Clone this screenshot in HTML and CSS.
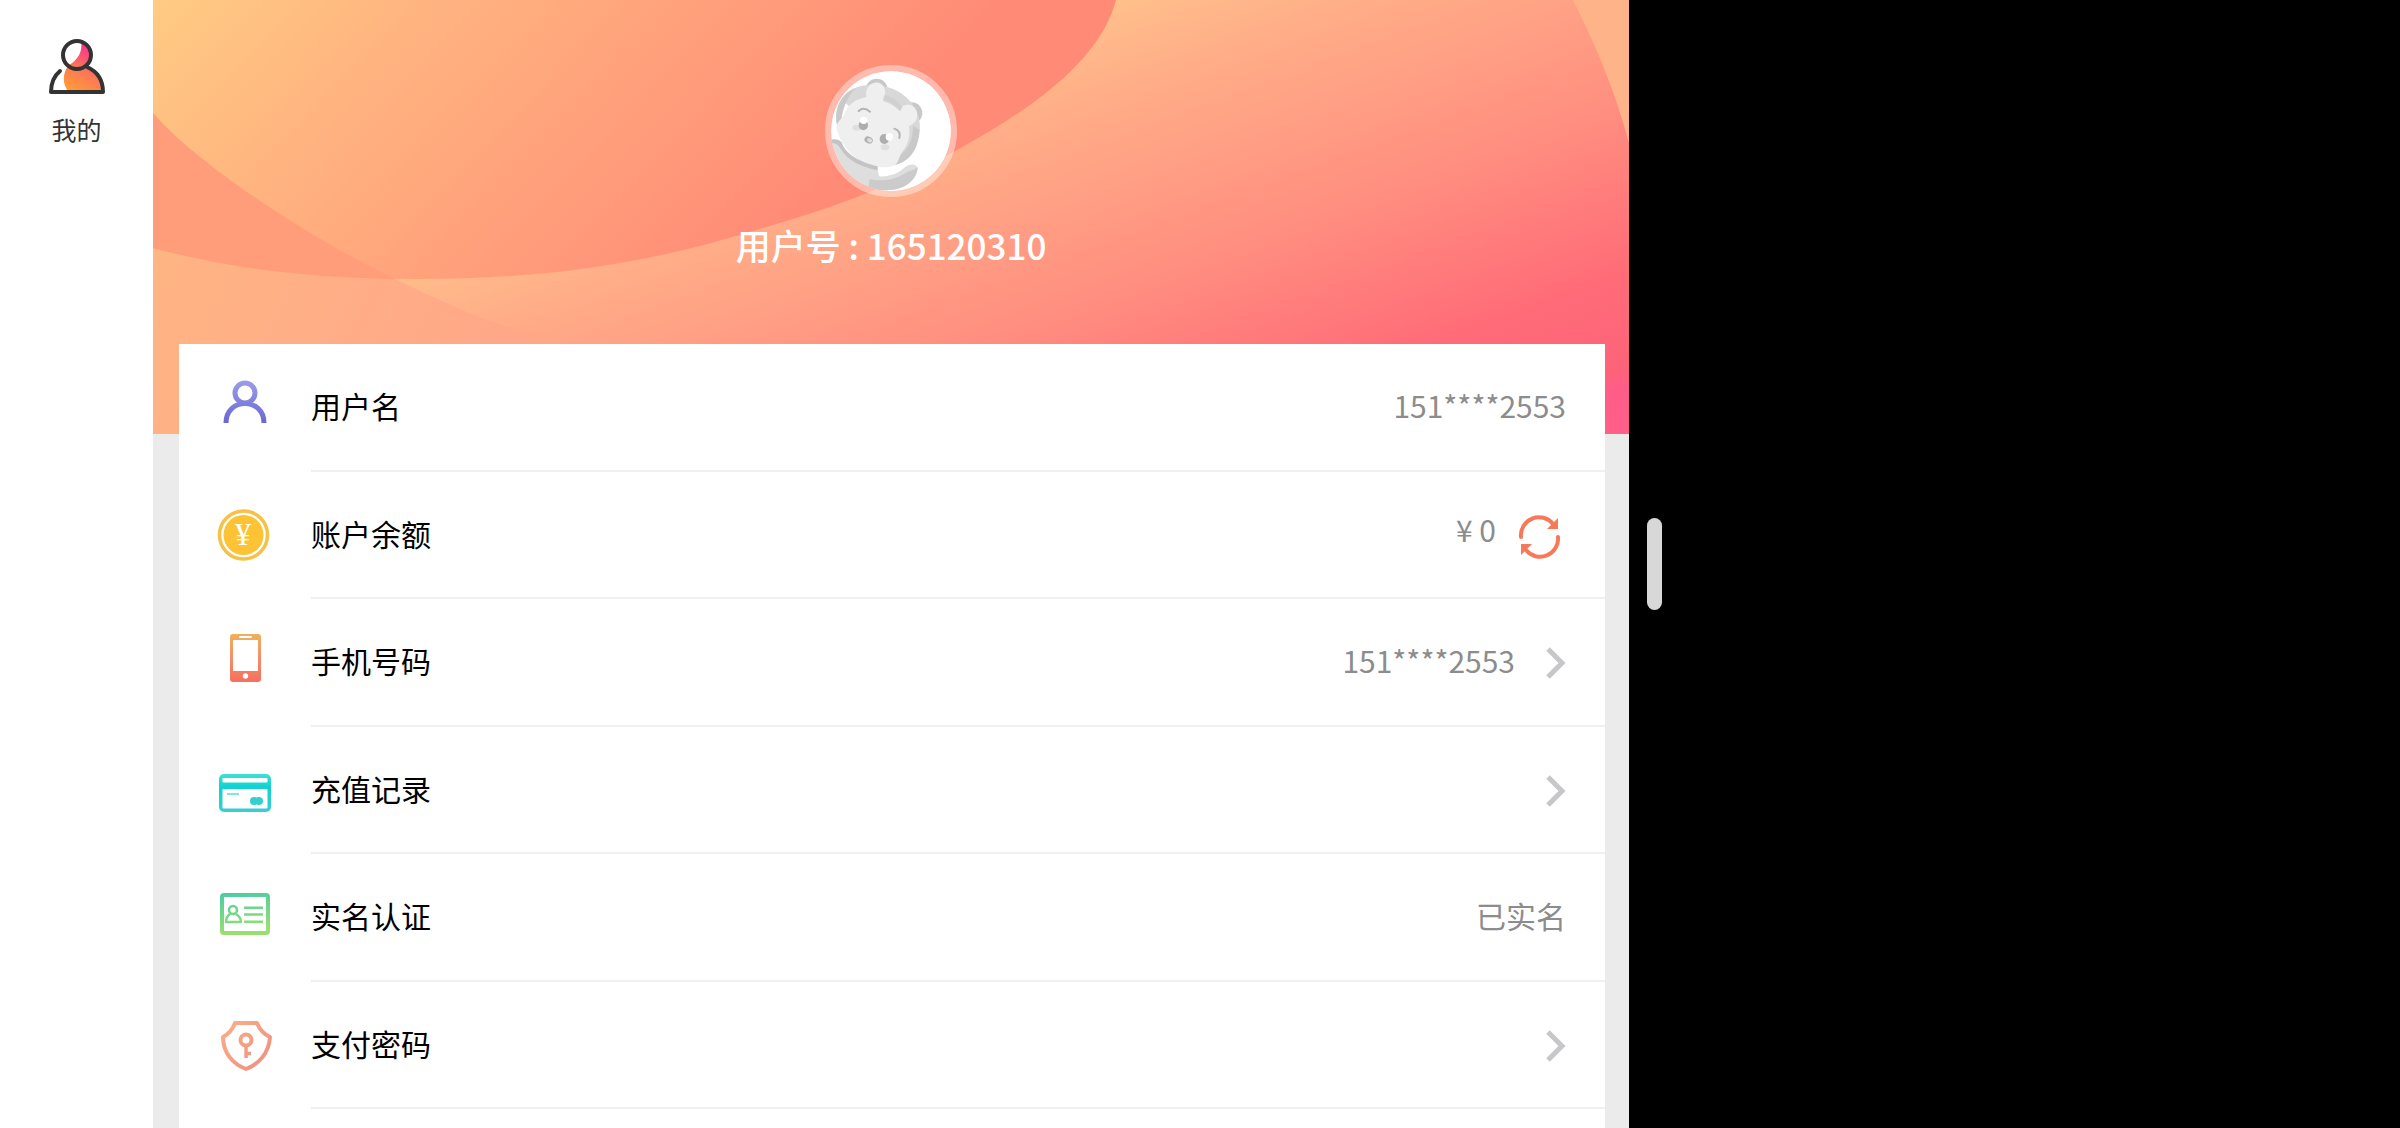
FILE: index.html
```html
<!DOCTYPE html>
<html lang="zh-CN">
<head>
<meta charset="UTF-8">
<meta name="viewport" content="width=device-width, initial-scale=1.0">
<title>我的</title>
<link rel="stylesheet" href="styles.css">
</head>
<body>

<nav class="sidebar">
    <a class="tab" href="#mine">
        <svg class="tab-icon" viewBox="0 0 64 64" fill="none">
            <defs>
                <linearGradient id="g-tab" x1="44" y1="14" x2="22" y2="56" gradientUnits="userSpaceOnUse">
                    <stop offset="0" stop-color="#f5328c"/>
                    <stop offset=".5" stop-color="#fd7458"/>
                    <stop offset="1" stop-color="#ff9c38"/>
                </linearGradient>
            </defs>
            <path fill="url(#g-tab)" d="M36 9C38 19 33 28 24 33C30 39 38 38 43 34C48 27 48 12 36 9Z"/>
            <path fill="url(#g-tab)" d="M24 33C17 41 17 53 24 60H58C57 47 51 39 43 35C37 39 29 38 24 33Z"/>
            <circle cx="32" cy="23" r="14" stroke="#333" stroke-width="4"/>
            <path d="M15 39C9 44 6 51 6 60H58C58 47 51 39 42 35" stroke="#333" stroke-width="4" stroke-linecap="round" stroke-linejoin="round"/>
        </svg>
        <span>我的</span>
    </a>
</nav>

<main class="page" id="mine">
    <header class="hero">
        <!-- fundo em camadas -->
        <svg class="hero-bg" viewBox="0 0 1476 434" preserveAspectRatio="none">
            <defs>
                <linearGradient id="g-base" x1="115" y1="312" x2="317" y2="861" gradientUnits="userSpaceOnUse">
                    <stop offset="0" stop-color="#ffc08b"/>
                    <stop offset=".14" stop-color="#ffae88"/>
                    <stop offset=".46" stop-color="#ff8f80"/>
                    <stop offset=".74" stop-color="#ff6c78"/>
                    <stop offset=".89" stop-color="#fd6378"/>
                    <stop offset=".92" stop-color="#ff5d89"/>
                    <stop offset="1" stop-color="#ff5f88"/>
                </linearGradient>
                <linearGradient id="g-oval" x1="0" y1="0" x2="442" y2="424" gradientUnits="userSpaceOnUse">
                    <stop offset="0" stop-color="#ffcb83"/>
                    <stop offset=".33" stop-color="#ffb480"/>
                    <stop offset=".67" stop-color="#ff9f7b"/>
                    <stop offset="1" stop-color="#ff8b77"/>
                </linearGradient>
                <linearGradient id="g-low" x1="0" y1="250" x2="300" y2="400" gradientUnits="userSpaceOnUse">
                    <stop offset="0" stop-color="#ffb584"/>
                    <stop offset="1" stop-color="#ffa888"/>
                </linearGradient>
            </defs>
            <rect width="1476" height="434" fill="url(#g-base)"/>
            <path fill="url(#g-low)" d="M0 113C40 160 150 235 242 279C300 307 340 324 376 333L420 350V434H0Z"/>
            <path fill="url(#g-oval)" d="M0 0H963C950 50 900 98 804 150C780 163 750 178 714 193C680 207 640 219 603 230C500 262 400 279 265 279C170 279 80 270 0 248Z"/>
            <path fill="#ff9d7b" d="M0 113C40 160 150 235 242 279C150 277 75 268 0 248Z"/>
            <path fill="#ffb388" d="M1420 0C1442 44 1462 90 1476 143V0Z"/>
        </svg>
        <div class="avatar">
            <svg viewBox="66 64 360 360">
                <rect x="66" y="64" width="360" height="360" fill="#fff"/>
                <circle cx="203" cy="120" r="33" fill="#c8c8c8"/>
                <circle cx="308" cy="190" r="32" fill="#c8c8c8"/>
                <path fill="#d8d8d8" d="M84 225C70 150 125 100 195 107C285 108 345 180 331 255C324 305 300 335 258 346L240 300L110 160Z"/>
                <path fill="#c9c9c9" d="M84 225C74 175 100 130 140 115C112 145 100 180 97 215ZM331 240C328 300 300 335 258 346L272 318C300 296 312 270 312 228Z"/>
                <path fill="#efefef" d="M82 236C84 215 98 208 105 195C115 165 140 148 172 142C165 92 222 84 228 122C230 135 228 145 222 154C242 160 258 170 272 184C276 158 318 158 324 188C328 210 316 222 300 230C306 265 292 295 278 308C270 325 266 345 254 348C225 358 180 352 150 332C110 305 92 270 82 236Z"/>
                <path fill="#d0d0d0" d="M222 150C245 154 262 168 274 184L280 172C268 155 244 138 226 136Z"/>
                <path fill="#dedede" d="M62 272C75 268 90 272 96 285C120 325 165 345 206 360L210 380C240 382 270 370 286 354C302 340 326 342 326 358C320 390 290 420 240 421L190 430L60 420Z"/>
                <path fill="#c4c4c4" d="M62 272C75 266 90 268 98 278C112 322 170 342 206 350V362C160 352 115 335 94 296C86 282 76 278 64 282Z"/>
                <path fill="#cbcbcb" d="M182 388C225 398 260 388 290 370C306 360 318 362 325 352C328 385 290 422 236 421H202V432H176Z"/>
                <path fill="none" stroke="#b4b4b4" stroke-width="6" stroke-linecap="round" d="M149 184Q164 170 183 186M256 237Q276 243 271 265"/>
                <ellipse cx="143" cy="234" rx="13" ry="9" fill="#dfdfdf"/>
                <ellipse cx="228" cy="293" rx="13" ry="9" fill="#dfdfdf"/>
                <ellipse cx="163" cy="227" rx="14" ry="15" fill="#adadad"/>
                <ellipse cx="226" cy="268" rx="14" ry="15" fill="#adadad"/>
                <circle cx="164" cy="212" r="11" fill="#fff"/>
                <circle cx="241" cy="262" r="11" fill="#fff"/>
                <ellipse cx="179" cy="271" rx="13" ry="10" fill="#b0b0b0" transform="rotate(25 179 271)"/>
                <ellipse cx="182" cy="272" rx="8" ry="6" fill="#ddd" transform="rotate(25 182 272)"/>
            </svg>
        </div>
        <h1 class="user-no">用户号 : 165120310</h1>
    </header>

    <ul class="card">
        <li class="row">
            <svg class="row-icon" viewBox="0 0 64 64" fill="none" stroke="url(#g-user)" stroke-width="5">
                <defs>
                    <linearGradient id="g-user" x1="0" y1="5" x2="0" y2="48" gradientUnits="userSpaceOnUse">
                        <stop offset="0" stop-color="#9a9fe6"/>
                        <stop offset="1" stop-color="#6a66d4"/>
                    </linearGradient>
                </defs>
                <circle cx="32" cy="18" r="10"/>
                <path d="M13 48C13 22 51 22 51 48"/>
            </svg>
            <div class="row-body">
                <span class="label">用户名</span>
                <span class="value">151****2553</span>
            </div>
        </li>
        <li class="row">
            <svg class="row-icon" viewBox="0 0 64 64">
                <circle cx="30.500" cy="32" r="24" fill="none" stroke="#f7c047" stroke-width="3.500"/>
                <circle cx="30.500" cy="32" r="20" fill="#fdc334"/>
                <text class="coin-sign" x="30" y="42" text-anchor="middle">¥</text>
            </svg>
            <div class="row-body">
                <span class="label">账户余额</span>
                <div class="balance">
                    <span class="value">¥ 0</span>
                    <button class="refresh" type="button" aria-label="刷新">
                        <svg viewBox="0 0 48 48" fill="none" stroke="#f8795a" stroke-width="4" stroke-linecap="round">
                            <path d="M3 26A18 18 0 0 1 35 13M40 26A18 18 0 0 1 8 39"/>
                            <path fill="#f8795a" stroke="none" d="M40 7V18H29ZM3 33H14L3 44Z"/>
                        </svg>
                    </button>
                </div>
            </div>
        </li>
        <li class="row">
            <svg class="row-icon" viewBox="0 0 64 64">
                <defs>
                    <linearGradient id="g-phone" x1="0" y1="0" x2="0" y2="1">
                        <stop offset="0" stop-color="#f0b05c"/>
                        <stop offset=".5" stop-color="#f58e68"/>
                        <stop offset="1" stop-color="#f4705f"/>
                    </linearGradient>
                </defs>
                <rect x="17" y="4" width="31" height="48" rx="3" fill="url(#g-phone)"/>
                <rect x="20" y="10" width="25" height="31" fill="#fff"/>
                <rect x="26" y="6" width="13" height="2" rx="1" fill="#fff"/>
                <circle cx="32.500" cy="46" r="2.700" fill="#fff"/>
            </svg>
            <a class="row-body" href="#phone">
                <span class="label">手机号码</span>
                <span class="value">151****2553</span>
                <svg class="arrow" viewBox="0 0 20 34"><path d="M2 3L16 17L2 31"/></svg>
            </a>
        </li>
        <li class="row">
            <svg class="row-icon" viewBox="0 0 64 64">
                <defs>
                    <linearGradient id="g-bank" x1="0" y1="0" x2="0" y2="1">
                        <stop offset="0" stop-color="#3fe0d8"/>
                        <stop offset=".35" stop-color="#0fd2d2"/>
                        <stop offset="1" stop-color="#3ccdd0"/>
                    </linearGradient>
                </defs>
                <rect x="6" y="16" width="52" height="38" rx="5" fill="url(#g-bank)"/>
                <rect x="9.500" y="20" width="45" height="4.500" rx="1" fill="#fff"/>
                <rect x="9.500" y="31" width="45" height="19.500" rx="1" fill="#fff"/>
                <path d="M14 36H26" stroke="#5cdcda" stroke-width="1.500"/>
                <circle cx="41" cy="43" r="4" fill="#35cfd0"/>
                <circle cx="46" cy="43" r="4" fill="#35cfd0"/>
            </svg>
            <a class="row-body" href="#records">
                <span class="label">充值记录</span>
                <svg class="arrow" viewBox="0 0 20 34"><path d="M2 3L16 17L2 31"/></svg>
            </a>
        </li>
        <li class="row">
            <svg class="row-icon" viewBox="0 0 64 64" fill="none" stroke="url(#g-id)">
                <defs>
                    <linearGradient id="g-id" x1="0" y1="8" x2="6" y2="50" gradientUnits="userSpaceOnUse">
                        <stop offset="0" stop-color="#48cba6"/>
                        <stop offset="1" stop-color="#97e070"/>
                    </linearGradient>
                </defs>
                <rect x="9" y="10" width="46" height="38" rx="2" stroke-width="4"/>
                <circle cx="20" cy="25" r="4" stroke-width="2.500"/>
                <path stroke-width="2.500" stroke-linejoin="round" d="M17 29C14 31 13 33 13 37H28C28 33 26 31 23 29"/>
                <path stroke-width="2.500" d="M31 22.700L50 22.800M31 29.500L50 29.600M31 36.700L50 36.800"/>
            </svg>
            <div class="row-body">
                <span class="label">实名认证</span>
                <span class="value">已实名</span>
            </div>
        </li>
        <li class="row">
            <svg class="row-icon" viewBox="0 0 64 64" fill="none" stroke="url(#g-shield)" stroke-width="4">
                <defs>
                    <linearGradient id="g-shield" x1="8" y1="8" x2="56" y2="56" gradientUnits="userSpaceOnUse">
                        <stop offset="0" stop-color="#fbb086"/>
                        <stop offset="1" stop-color="#ef8e80"/>
                    </linearGradient>
                </defs>
                <path stroke-linejoin="round" d="M22 10H44Q48 20 57 24C56 40 46 51 33 56C20 51 10 40 10 24Q18 20 22 10Z"/>
                <circle cx="33" cy="27" r="5.500" stroke-width="4"/>
                <path stroke-width="3.500" d="M33 32L33.100 45M33 40.500L38 40.600"/>
            </svg>
            <a class="row-body" href="#password">
                <span class="label">支付密码</span>
                <svg class="arrow" viewBox="0 0 20 34"><path d="M2 3L16 17L2 31"/></svg>
            </a>
        </li>
    </ul>
</main>

<aside class="side-pane">
    <button class="handle" type="button" aria-label="调整窗口"></button>
</aside>

</body>
</html>
```
FILE: styles.css
```css
* {
    box-sizing: border-box;
}

body {
    margin: 0;
    height: 100vh;
    overflow: hidden;
    display: grid;
    grid-template-columns: 153px 1476fr 771fr;
    background: #000;
    color: #000;
    font-family: "Noto Sans CJK SC", sans-serif;
    font-size: 30px;
    line-height: 40px;
}

a {
    color: inherit;
    text-decoration: none;
}

button {
    border: 0;
    padding: 0;
    background: none;
    cursor: pointer;
}

svg {
    display: block;
}

.sidebar {
    background: #fff;
    padding-top: 32px;
}

.tab {
    display: flex;
    flex-direction: column;
    align-items: center;
    gap: 18px;
    color: #333;
    font-size: 25px;
    line-height: 30px;
}

.tab-icon {
    width: 64px;
    height: 64px;
}

.page {
    display: flex;
    flex-direction: column;
    min-height: 0;
    background: #ebebeb;
}

/* topo */
.hero {
    position: relative;
    flex: none;
    height: 434px;
    padding-top: 65px;
    display: flex;
    flex-direction: column;
    align-items: center;
    gap: 28px;
}

.hero-bg {
    position: absolute;
    inset: 0;
    width: 100%;
    height: 100%;
}

.avatar {
    position: relative;
    width: 132px;
    height: 132px;
    border: 6px solid rgba(255, 255, 255, 0.4);
    border-radius: 50%;
}

.avatar svg {
    width: 120px;
    height: 120px;
    border-radius: 50%;
}

.user-no {
    position: relative;
    margin: 0;
    color: #fff;
    font-size: 35px;
    font-weight: 500;
    line-height: 40px;
}

/* lista */
.card {
    position: relative;
    flex: 1;
    margin: -90px 24px 0 26px;
    padding: 0;
    list-style: none;
    background: #fff;
}

.row {
    display: flex;
    align-items: center;
    height: 127px;
}

.row:nth-child(odd) {
    height: 128px;
}

.row-icon {
    flex: none;
    width: 64px;
    height: 64px;
    margin: 0 34px 2px;
}

.coin-sign {
    fill: #fff;
    font-family: "Liberation Serif", serif;
    font-size: 32px;
}

.row-body {
    flex: 1;
    align-self: stretch;
    display: flex;
    align-items: center;
    padding-right: 39px;
    border-bottom: 2px solid #f0f0f0;
}

.label {
    flex: 1;
}

.label,
.value {
    padding-bottom: 4px;
}

.value {
    color: #8c8c8c;
}

.balance {
    display: flex;
    align-items: flex-start;
    gap: 22px;
}

.balance .value {
    line-height: 36px;
}

.refresh svg {
    width: 48px;
    height: 48px;
}

.arrow {
    width: 20px;
    height: 34px;
    margin: 2px 0 0 31px;
    fill: none;
    stroke: #c7c7c9;
    stroke-width: 5px;
}

/* painel preto à direita */
.side-pane {
    display: flex;
    align-items: center;
    padding-left: 18px;
}

.handle {
    width: 15px;
    height: 92px;
    border-radius: 8px;
    background: #d8d8d8;
}
```
